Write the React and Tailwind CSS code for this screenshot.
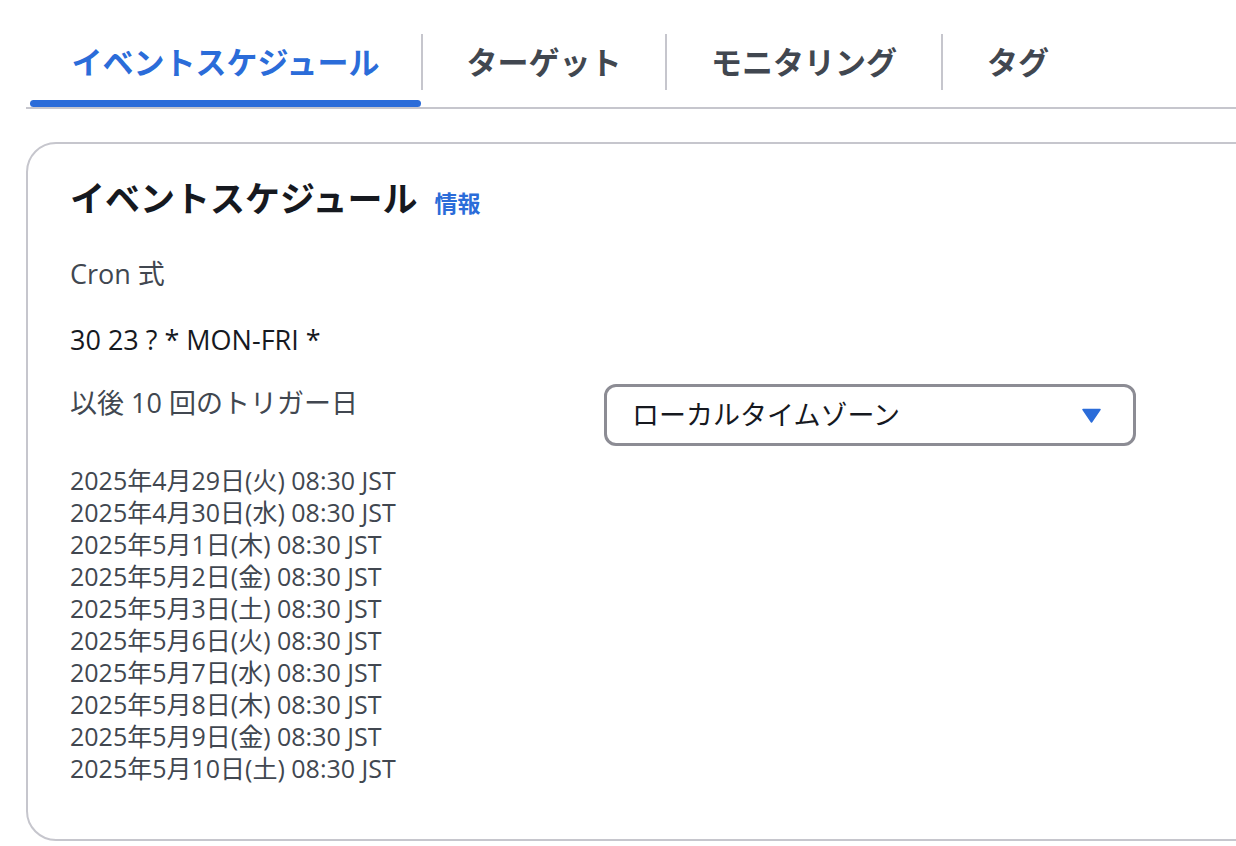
const FONT = { fontFamily: '"Open Sans", "Noto Sans CJK JP", sans-serif' }

const tabs = [
  { label: 'イベントスケジュール', width: 'w-[391px]', active: true },
  { label: 'ターゲット', width: 'w-[242px]' },
  { label: 'モニタリング', width: 'w-[274px]' },
  { label: 'タグ', width: 'w-[150px]' },
]

const dates = [
  '2025年4月29日(火) 08:30 JST',
  '2025年4月30日(水) 08:30 JST',
  '2025年5月1日(木) 08:30 JST',
  '2025年5月2日(金) 08:30 JST',
  '2025年5月3日(土) 08:30 JST',
  '2025年5月6日(火) 08:30 JST',
  '2025年5月7日(水) 08:30 JST',
  '2025年5月8日(木) 08:30 JST',
  '2025年5月9日(金) 08:30 JST',
  '2025年5月10日(土) 08:30 JST',
]

function Tab({ label, width, active }) {
  return (
    <div className={`flex flex-col ${width}`}>
      <div
        className={`flex h-[56px] items-center justify-center text-[31px] font-bold ${
          active ? 'text-[#2b6cd9]' : 'text-[#414750]'
        }`}
      >
        {label}
      </div>
      <div className={`mt-[10px] h-[7px] rounded-full ${active ? 'bg-[#2b6cd9]' : 'bg-transparent'}`} />
    </div>
  )
}

function TabBar() {
  return (
    <div className="ml-[26px] flex items-start border-b-2 border-[#c6c6cd] pl-[4px] pt-[34px]">
      {tabs.map((t, i) => (
        <div key={t.label} className="flex items-start">
          {i > 0 && <div className="h-[56px] w-[2px] bg-[#c6c6cd]" />}
          <Tab {...t} />
        </div>
      ))}
    </div>
  )
}

function Dropdown() {
  return (
    <button className="flex h-[62px] w-[532px] items-center justify-between rounded-[12px] border-[3px] border-[#8c8c94] bg-white pl-[25px] pr-[32px] text-[27px] text-[#16191f]">
      <span>ローカルタイムゾーン</span>
      <svg width="19" height="15" viewBox="0 0 19 15">
        <path d="M1 1.5 L18 1.5 L9.5 14 Z" fill="#2b6cd9" stroke="#2b6cd9" strokeWidth="1.5" strokeLinejoin="round" />
      </svg>
    </button>
  )
}

export default function App() {
  return (
    <div className="min-h-[846px] w-full overflow-hidden bg-white" style={FONT}>
      <TabBar />
      <div className="ml-[26px] mt-[33px] w-[1260px] rounded-[30px] border-2 border-[#c6c6cd] pb-[55px] pl-[42px] pt-[35px]">
        <div className="flex h-[40px] items-baseline gap-[17px]">
          <h2 className="text-[35px] font-bold leading-[40px] text-[#16191f]">イベントスケジュール</h2>
          <a className="text-[23px] font-bold text-[#2b6cd9]">情報</a>
        </div>
        <p className="mt-[39px] text-[27px] leading-[32px] text-[#414750]">Cron 式</p>
        <p className="mt-[34px] text-[27px] leading-[32px] text-[#16191f]">30 23 ? * MON-FRI *</p>
        <div className="mt-[28px] flex items-start">
          <p className="mt-[3px] w-[534px] text-[27px] leading-[32px] text-[#414750]">以後 10 回のトリガー日</p>
          <Dropdown />
        </div>
        <ul className="mt-[18px] text-[25px] leading-[32px] text-[#414750]">
          {dates.map((d) => (
            <li key={d}>{d}</li>
          ))}
        </ul>
      </div>
    </div>
  )
}
